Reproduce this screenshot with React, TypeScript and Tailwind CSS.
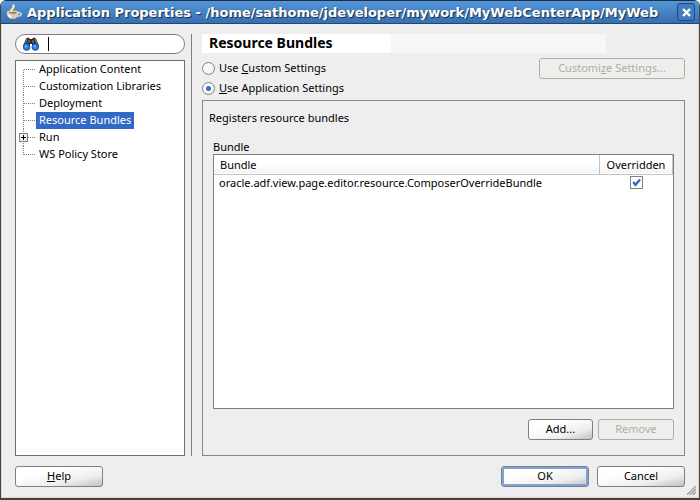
import type { ReactNode } from 'react';
import clsx from 'clsx';

const treeItems = [
  { label: 'Application Content' },
  { label: 'Customization Libraries' },
  { label: 'Deployment' },
  { label: 'Resource Bundles', selected: true },
  { label: 'Run', expandable: true },
  { label: 'WS Policy Store' },
];

const bundles = [
  { name: 'oracle.adf.view.page.editor.resource.ComposerOverrideBundle', overridden: true },
];

function CupIcon() {
  return (
    <svg width="17" height="18" viewBox="0 0 17 18" className="shrink-0">
      <ellipse cx="7" cy="16" rx="6.500" ry="1.600" fill="#5f6f85" />
      <path d="M12 10c4.500-1.500 4.500 3-.5 3.200" fill="none" stroke="#d8d4c8" strokeWidth="1.500" />
      <path d="M.8 9.500h12c0 4-2 6.300-5.800 6.300S.8 13.500.8 9.500z" fill="#d2cfc8" />
      <path d="M1.500 10.500c0 2.800 2 4.500 4.500 5-1-1-1.500-2.500-1.500-5z" fill="#fff" />
      <ellipse cx="6.800" cy="9.500" rx="6" ry="2" fill="#f4f1e6" stroke="#b5b1a5" strokeWidth="0.6" />
      <ellipse cx="6.800" cy="9.700" rx="4.200" ry="1.100" fill="#9c7c4c" />
      <path d="M6 9C3 6 10 5.500 7 1.500" fill="none" stroke="#ffe27a" strokeWidth="2.200" />
      <path d="M6.200 8.500C4 6 9.500 5 7 2" fill="none" stroke="#fff8d8" strokeWidth="0.8" />
    </svg>
  );
}

function BinocularsIcon() {
  return (
    <svg width="16" height="14" viewBox="0 0 16 14" className="shrink-0">
      <path d="M3 1.500 5.500.5 7 2h2L10.500.5l2.500 1L16 9l-2 3H9.500L9 7H7l-.5 5H2L0 9z" fill="#2d2d2d" />
      <path d="M4 2 2 7M12 2l2 5M6 3v3M10 3v3" stroke="#8a8a8a" strokeWidth="1" />
      <circle cx="3.600" cy="10" r="3.400" fill="#1c80ee" stroke="#1b2d4a" strokeWidth="0.6" />
      <circle cx="12.300" cy="10" r="3.400" fill="#1c80ee" stroke="#1b2d4a" strokeWidth="0.6" />
      <circle cx="2.900" cy="9.300" r="1.200" fill="#62b0ff" />
      <circle cx="11.600" cy="9.300" r="1.200" fill="#62b0ff" />
    </svg>
  );
}

function Connector({ first, last, expandable }: { first: boolean; last: boolean; expandable?: boolean }) {
  return (
    <svg width="20" height="17" viewBox="0 0 20 17" className="shrink-0" shapeRendering="crispEdges">
      <path
        d={`M7.500 ${first ? 9 : 0}V${last ? 9 : 17}M8 8.500h12`}
        fill="none"
        stroke="#808080"
        strokeDasharray="1 1"
      />
      {expandable && (
        <>
          <rect x="3.500" y="4.500" width="8" height="8" fill="#f4f0e8" stroke="#808080" />
          <path d="M5 8.500h5M7.500 6v5" stroke="#000" />
        </>
      )}
    </svg>
  );
}

function PushButton({
  children,
  disabled,
  primary,
  className,
}: {
  children: ReactNode;
  disabled?: boolean;
  primary?: boolean;
  className?: string;
}) {
  return (
    <button
      type="button"
      disabled={disabled}
      className={clsx(
        'flex h-[21px] items-center justify-center rounded-[3px] border pb-0.5',
        disabled
          ? 'border-[#b0b09a] text-[#b0b09a]'
          : 'border-[#808080] bg-linear-to-br from-white from-30% via-[#eeeeee] via-70% to-[#c0c0c0]',
        primary && 'inset-ring-2 inset-ring-[#7ba3dc]',
        className,
      )}
    >
      {children}
    </button>
  );
}

function ScopeRadio({ children, checked }: { children: ReactNode; checked?: boolean }) {
  return (
    <label className="flex h-5 items-center gap-1">
      <input
        type="radio"
        name="scope"
        defaultChecked={checked}
        className="grid size-[13px] appearance-none place-items-center rounded-full border border-[#808080] bg-linear-to-br from-white to-[#f0f0f0] before:size-[5px] before:rounded-full checked:before:bg-[#3b6fc4]"
      />
      <span className="pb-0.5">{children}</span>
    </label>
  );
}

export default function App() {
  return (
    <div className="flex min-h-screen flex-col overflow-hidden rounded-t-md border-x border-b-2 border-[#46423c] bg-[#eeeeee] font-['Noto_Sans','Open_Sans',sans-serif] text-[11px] leading-[15px] text-black">
      <header className="flex h-6 items-center gap-1 border-t border-b border-t-[#1c2c44] border-b-[#24476f] bg-linear-to-b from-[#5596d8] to-[#3570b2] pr-1 pl-[5px]">
        <CupIcon />
        <h1 className="min-w-0 flex-1 overflow-hidden font-['DejaVu_Sans',sans-serif] text-[13px] font-bold whitespace-nowrap text-white [text-shadow:1px_1px_1px_#182c48]">
          Application Properties - /home/sathome/jdeveloper/mywork/MyWebCenterApp/MyWeb
        </h1>
        <button
          type="button"
          aria-label="Close"
          className="grid size-[18px] shrink-0 place-items-center rounded-[3px] border border-[#1f4a80] bg-[#3f7cc0]"
        >
          <svg width="9" height="9" viewBox="0 0 9 9">
            <path d="m1 1 7 7m0-7-7 7" stroke="#fff" strokeWidth="2.400" />
          </svg>
        </button>
      </header>

      <div className="flex flex-1 flex-col border-x border-b border-[#e2d8cc] px-[13px] pt-[10px] pb-[10px]">
        <main className="flex flex-1 gap-[6px]">
          <aside className="flex w-[170px] shrink-0 flex-col gap-[6px]">
            <label className="flex h-5 items-center gap-[9px] rounded-full border border-[#808080] bg-white pr-2 pl-[7px]">
              <BinocularsIcon />
              <span className="h-[14px] w-px shrink-0 bg-black" />
              <input type="text" aria-label="Search" className="w-full min-w-0 outline-none" />
            </label>
            <ul className="flex-1 border border-[#6e6e6e] bg-white">
              {treeItems.map((item, index) => (
                <li key={item.label} className="flex h-[17px]">
                  <Connector
                    first={index === 0}
                    last={index === treeItems.length - 1}
                    expandable={item.expandable}
                  />
                  <span className={clsx('px-[3px]', item.selected && 'bg-[#316ac5] text-white')}>{item.label}</span>
                </li>
              ))}
            </ul>
          </aside>

          <div className="w-px bg-[#808080]" />

          <section className="ml-1 flex min-w-0 flex-1 flex-col">
            <div className="mr-[79px] flex h-[19px] bg-[#f7f7f7]">
              <h2 className="w-[189px] bg-white pl-[7px] text-[14px] leading-[18px] font-bold">Resource Bundles</h2>
            </div>

            <div className="mt-[5px] flex items-start justify-between">
              <div>
                <ScopeRadio>
                  Use <u>C</u>ustom Settings
                </ScopeRadio>
                <ScopeRadio checked>
                  <u>U</u>se Application Settings
                </ScopeRadio>
              </div>
              <PushButton disabled className="w-[146px]">
                <span>
                  Customi<u>z</u>e Settings...
                </span>
              </PushButton>
            </div>

            <div className="mt-[2px] flex flex-1 flex-col border border-[#8d858d] px-[10px] pt-[9px] pb-[15px]">
              <p className="-ml-1">Registers resource bundles</p>
              <h3 className="mt-[14px]">Bundle</h3>
              <div className="flex-1 border border-[#808080] bg-white">
                <table className="w-full table-fixed border-collapse">
                  <thead>
                    <tr className="h-[19px] border-b border-[#c4c4c4] bg-linear-to-b from-white from-50% to-[#f3f3f7]">
                      <th className="border-r border-[#c4c4c4] px-[6px] text-left font-normal">Bundle</th>
                      <th className="w-[73px] border-r border-[#c4c4c4] text-center font-normal">Overridden</th>
                    </tr>
                  </thead>
                  <tbody>
                    {bundles.map((bundle) => (
                      <tr key={bundle.name} className="h-[17px]">
                        <td className="px-[5px] whitespace-nowrap">{bundle.name}</td>
                        <td>
                          <div className="grid place-items-center">
                            <input
                              type="checkbox"
                              aria-label={`${bundle.name} overridden`}
                              defaultChecked={bundle.overridden}
                              className="peer col-start-1 row-start-1 size-[13px] appearance-none border border-[#808080] bg-white"
                            />
                            <svg
                              width="9"
                              height="9"
                              viewBox="0 0 9 9"
                              className="pointer-events-none invisible col-start-1 row-start-1 peer-checked:visible"
                            >
                              <path d="m1.200 4 2.300 2.800L8 1.500" fill="none" stroke="#316ac5" strokeWidth="2.400" />
                            </svg>
                          </div>
                        </td>
                      </tr>
                    ))}
                  </tbody>
                </table>
              </div>
              <div className="mt-[10px] flex justify-end gap-[5px]">
                <PushButton className="w-[65px]">Add...</PushButton>
                <PushButton disabled className="w-[76px]">
                  Remove
                </PushButton>
              </div>
            </div>
          </section>
        </main>

        <footer className="mt-[10px] flex gap-2">
          <PushButton className="mr-auto w-[88px]">
            <span>
              <u>H</u>elp
            </span>
          </PushButton>
          <PushButton primary className="w-[88px]">
            OK
          </PushButton>
          <PushButton className="w-[88px]">Cancel</PushButton>
          <svg width="9" height="9" viewBox="0 0 9 9" className="-mr-[11px] -mb-2 -ml-[6px] self-end">
            <path d="M0 9 9 0M3 9l6-6M6 9l3-3" stroke="#a09c8c" strokeWidth="1.300" />
          </svg>
        </footer>
      </div>
    </div>
  );
}
